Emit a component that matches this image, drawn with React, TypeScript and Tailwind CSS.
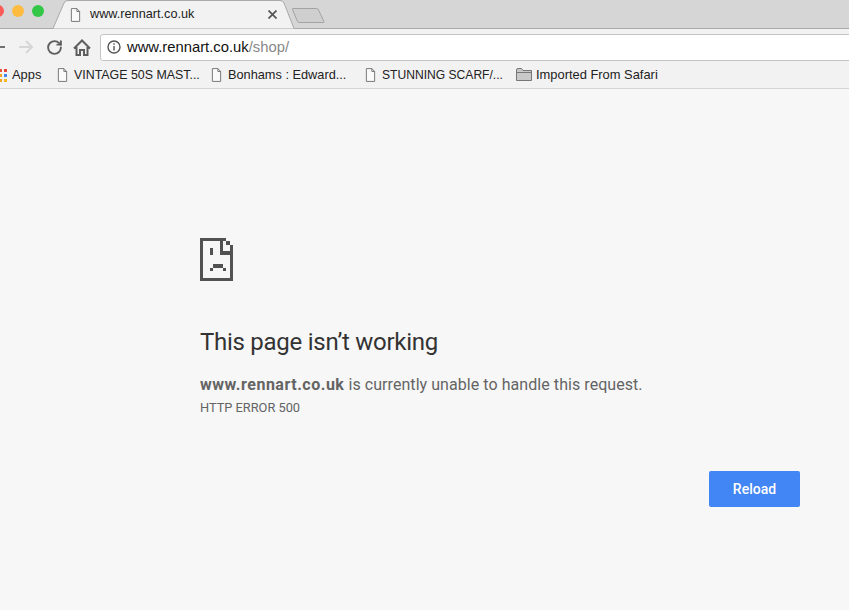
import { RotateCw } from "lucide-react";

const uiFont = "font-['Liberation_Sans',Arial,sans-serif]";

function FileIcon({ className }: { className?: string }) {
  return (
    <svg viewBox="0 0 12 15" className={className} fill="none" stroke="#6e6e6e" strokeWidth="1">
      <path d="M1.5 .5h6l3 3.2v10.800h-9z" fill="#fafafa" />
      <path d="M7.500 .5v3.200h3" />
    </svg>
  );
}

function SadTab() {
  return (
    <svg width="33" height="43" viewBox="0 0 100 130" shapeRendering="crispEdges" fill="#525252">
      <rect x="0" y="0" width="80" height="10" />
      <rect x="80" y="10" width="10" height="10" />
      <rect x="90" y="20" width="10" height="110" />
      <rect x="0" y="0" width="10" height="130" />
      <rect x="0" y="120" width="100" height="10" />
      <rect x="60" y="10" width="10" height="30" />
      <rect x="60" y="40" width="40" height="10" />
      <rect x="30" y="30" width="10" height="20" />
      <rect x="40" y="80" width="30" height="10" />
      <rect x="30" y="90" width="10" height="10" />
      <rect x="70" y="90" width="10" height="10" />
    </svg>
  );
}

function Bookmark({ label, width, size }: { label: string; width: string; size: string }) {
  return (
    <div className={`flex items-center gap-[6px] ${width}`}>
      <FileIcon className="h-[14px] w-[11px] shrink-0" />
      <span className={`whitespace-nowrap ${size}`}>{label}</span>
    </div>
  );
}

export default function App() {
  return (
    <div className="flex h-[610px] w-[849px] flex-col overflow-hidden bg-[#f7f7f7]">
      {/* tab strip */}
      <div className={`flex h-[29px] shrink-0 border-b border-[#a9a9a9] bg-[#d6d6d6] ${uiFont}`}>
        <div className="ml-[-8px] flex h-[28px] w-[60px] shrink-0 items-start gap-2 pt-[5px]">
          <span className="h-3 w-3 rounded-full bg-[#fc5b57]" />
          <span className="h-3 w-3 rounded-full bg-[#fdbb40]" />
          <span className="h-3 w-3 rounded-full bg-[#33c748]" />
        </div>
        <div className="relative flex h-[29px] w-[242px] shrink-0 items-center pl-[18px] pr-[17px]">
          <svg className="absolute inset-0" width="242" height="29" viewBox="0 0 242 29" fill="none">
            <path d="M0 28.500h1L12 3q1-2.500 4-2.500h212q3 0 4 2.500l10 25.500" fill="#f2f2f2" stroke="#a9a9a9" />
          </svg>
          <FileIcon className="relative h-[14px] w-[11px] shrink-0" />
          <span className="relative ml-[9px] text-[12.7px] text-[#222]">www.rennart.co.uk</span>
          <svg className="relative ml-auto" width="9" height="9" viewBox="0 0 9 9" stroke="#555" strokeWidth="1.700">
            <path d="M.5 .5l8 8M8.500 .5l-8 8" />
          </svg>
        </div>
        <svg className="mt-[7px] -ml-[3px] shrink-0" width="36" height="18" viewBox="0 0 36 18" fill="#cfcfcf" stroke="#a3a3a3">
          <path d="M2 1.500q-1 0-.5 1l5 12q.5 1 1.500 1h24q1.500 0 1-1L27 2q-.5-.5-1.500-.5z" />
        </svg>
      </div>

      {/* toolbar */}
      <div className={`flex h-[33px] shrink-0 items-center bg-[#f2f2f2] pt-[3px] ${uiFont}`}>
        <svg className="-ml-[10px] shrink-0" width="16" height="14" viewBox="0 0 16 14" fill="none" stroke="#6f6f6f" strokeWidth="2">
          <path d="M15 7H2M8 1 2 7l6 6" />
        </svg>
        <svg className="ml-3 shrink-0" width="16" height="14" viewBox="0 0 16 14" fill="none" stroke="#d6d6d6" strokeWidth="2">
          <path d="M1 7h13M8 1l6 6-6 6" />
        </svg>
        <RotateCw className="ml-3 shrink-0" size={17} color="#5f5f5f" strokeWidth={2.700} />
        <svg className="ml-[10px] shrink-0" width="18" height="17" viewBox="0 0 18 17" fill="none" stroke="#5f5f5f" strokeWidth="2">
          <path d="M1 9.500 9 1.500l8 8M3.500 8v8h3.500v-5h4v5h3.500V8" />
        </svg>
        <div className="ml-[9px] flex h-[27px] min-w-0 flex-1 items-center rounded-[3px] border border-[#c4c4c4] bg-white pl-[6px] -mr-2">
          <svg width="14" height="14" viewBox="0 0 14 14" fill="none" stroke="#555" strokeWidth="1.400">
            <circle cx="7" cy="7" r="6" />
            <path d="M7 6v4.500M7 3.200v1.500" />
          </svg>
          <span className="ml-[6px] text-[14.8px] text-[#111]">
            www.rennart.co.uk<span className="text-[#888]">/shop/</span>
          </span>
        </div>
      </div>

      {/* bookmarks */}
      <div className={`flex h-[27px] shrink-0 items-center border-b border-[#d3d3d3] bg-[#f2f2f2] text-[12.900px] text-[#222] ${uiFont}`}>
        <div className="-ml-px grid w-[8px] shrink-0 grid-cols-2 gap-x-[1px] gap-y-[2px]">
          <span className="h-[3px] w-[3px] bg-[#e8553c]" />
          <span className="h-[3px] w-[3px] bg-[#e8453c]" />
          <span className="h-[3px] w-[3px] bg-[#f4a622]" />
          <span className="h-[3px] w-[3px] bg-[#4285f4]" />
          <span className="h-[3px] w-[3px] bg-[#f4a622]" />
          <span className="h-[3px] w-[3px] bg-[#f4b622]" />
        </div>
        <span className="ml-[5px] w-[45px]">Apps</span>
        <Bookmark label="VINTAGE 50S MAST..." width="w-[154px]" size="text-[12.4px]" />
        <Bookmark label="Bonhams : Edward..." width="w-[154px]" size="text-[12.750px]" />
        <Bookmark label="STUNNING SCARF/..." width="w-[151px]" size="text-[12.100px]" />
        <div className="flex items-center gap-1">
          <svg width="16" height="13" viewBox="0 0 16 13" fill="#c9c9c9" stroke="#777">
            <path d="M.5 2q0-1.500 1.500-1.500h3.500L7 2.500h8.500v10H.5z" />
            <path d="M.5 4.500h15" fill="none" />
          </svg>
          <span className="whitespace-nowrap">Imported From Safari</span>
        </div>
      </div>

      {/* error page */}
      <main className="flex flex-1 flex-col pl-[200px] pr-[49px] pt-[149px] font-['Roboto',sans-serif]">
        <SadTab />
        <h1 className="mt-[46px] text-[24px] leading-[30px] font-normal tracking-[-0.27px] text-[#333]">This page isn’t working</h1>
        <p className="mt-[18px] text-[16px] leading-[20px] tracking-[0.06px] text-[#646464]">
          <strong className="font-bold tracking-[0.52px]">www.rennart.co.uk</strong> is currently unable to handle this request.
        </p>
        <p className="mt-[3px] text-[12.800px] leading-[20px] text-[#646464]">HTTP ERROR 500</p>
        <button className="mt-[53px] h-9 w-[91px] self-end rounded-[2px] bg-[#4285f4] text-[14px] font-medium text-white">
          Reload
        </button>
      </main>
    </div>
  );
}
